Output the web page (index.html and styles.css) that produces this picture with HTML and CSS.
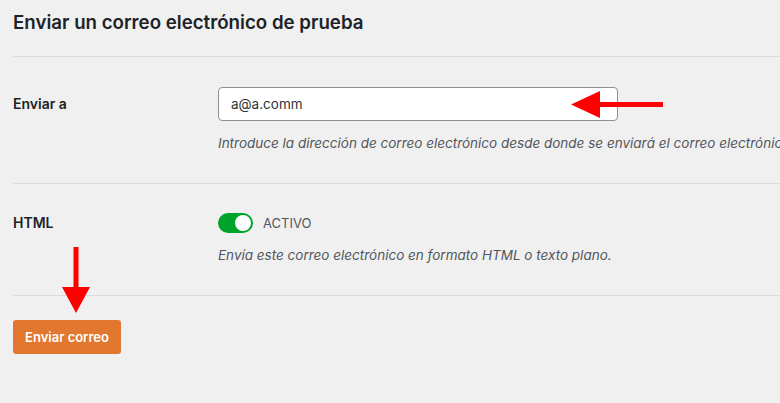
FILE: index.html
```html
<!DOCTYPE html>
<html lang="es">
<head>
    <meta charset="UTF-8">
    <meta name="viewport" content="width=device-width, initial-scale=1.0">
    <title>Enviar un correo electrónico de prueba</title>
    <link rel="stylesheet" href="styles.css">
</head>
<body>
    <div class="pagina">
        <h2 class="titulo">Enviar un correo electrónico de prueba</h2>

        <div class="fila">
            <label class="etiqueta etiqueta-input" for="enviar-a">Enviar a</label>
            <div class="campo">
                <input type="text" id="enviar-a" class="caja" value="a@a.comm">
                <p class="descripcion">Introduce la dirección de correo electrónico desde donde se enviará el correo electrónico de prueba.</p>
            </div>
        </div>

        <div class="fila">
            <span class="etiqueta etiqueta-toggle">HTML</span>
            <div class="campo">
                <label class="toggle">
                    <span class="interruptor"><span class="bolita"></span></span>
                    <span class="estado">ACTIVO</span>
                </label>
                <p class="descripcion">Envía este correo electrónico en formato HTML o texto plano.</p>
            </div>
        </div>

        <div class="acciones">
            <button type="button" class="boton-enviar">Enviar correo</button>
        </div>

        <!-- flechas de anotación -->
        <svg class="flecha flecha-izq" width="96" height="30" viewBox="0 0 96 30">
            <rect x="26" y="12" width="66" height="5" fill="#ff0000"/>
            <polygon points="0,14.5 29,1 29,28" fill="#ff0000"/>
        </svg>
        <svg class="flecha flecha-abajo" width="30" height="70" viewBox="0 0 30 70">
            <rect x="11.5" y="0" width="5" height="44" fill="#ff0000"/>
            <polygon points="0,40 28,40 14,66" fill="#ff0000"/>
        </svg>
    </div>
</body>
</html>
```

FILE: styles.css
```css
body {
    margin: 0;
    background-color: #f0f0f0;
    font-family: Inter, "Liberation Sans", Arial, sans-serif;
    color: #1d2327;
    overflow: hidden;
}
.pagina {
    position: relative;
    padding-left: 13px;
    min-height: 403px;
}
.titulo {
    margin: 0;
    padding-top: 10px;
    height: 57px;
    font-size: 18.7px;
    font-weight: 600;
    line-height: 26px;
    border-bottom: 1px solid #dcdcde;
    box-sizing: border-box;
}
.fila {
    display: flex;
    padding: 30px 0;
    border-bottom: 1px solid #dcdcde;
}
.fila + .fila {
    padding-top: 29px;
}
.etiqueta {
    width: 205px;
    flex-shrink: 0;
    font-size: 14px;
    font-weight: 600;
}
.etiqueta-input {
    line-height: 34px;
}
.etiqueta-toggle {
    line-height: 20px;
}
.campo {
    white-space: nowrap;
}
.caja {
    display: block;
    width: 400px;
    height: 34px;
    box-sizing: border-box;
    padding: 0 12px;
    border: 1px solid #8c8f94;
    border-radius: 4px;
    background-color: white;
    font-family: inherit;
    font-size: 13.5px;
    color: #2c3338;
}
.descripcion {
    margin: 12px 0 0;
    font-size: 13.5px;
    line-height: 20px;
    font-style: italic;
    color: #50575e;
}
.toggle {
    display: flex;
    align-items: center;
    gap: 10px;
    height: 20px;
}
.interruptor {
    position: relative;
    width: 35px;
    height: 20px;
    border-radius: 10px;
    background-color: #00a32a;
}
.bolita {
    position: absolute;
    top: 2px;
    right: 2px;
    width: 16px;
    height: 16px;
    border-radius: 50%;
    background-color: white;
}
.estado {
    font-size: 13px;
    color: #50575e;
}
.acciones {
    padding-top: 24px;
}
.boton-enviar {
    width: 108px;
    height: 34px;
    border: none;
    border-radius: 3px;
    background-color: #e27730;
    color: white;
    font-family: inherit;
    font-size: 13px;
    font-weight: 600;
    cursor: pointer;
}
.flecha {
    position: absolute;
}
.flecha-izq {
    left: 571px;
    top: 90px;
}
.flecha-abajo {
    left: 62px;
    top: 247px;
}
```
